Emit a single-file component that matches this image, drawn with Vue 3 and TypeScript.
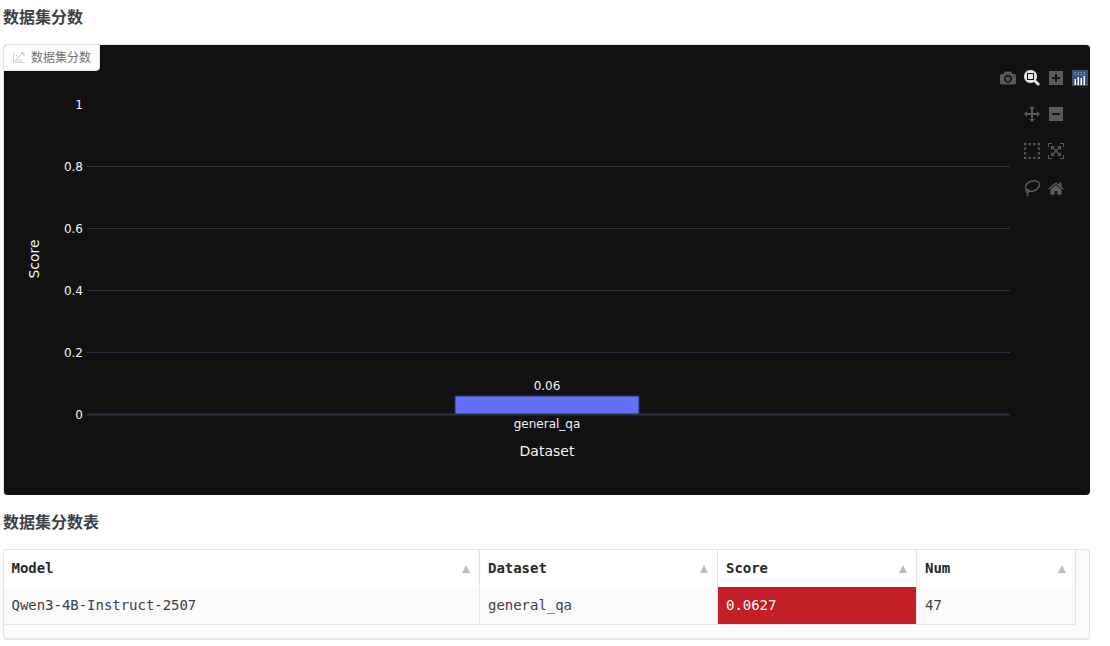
<script setup lang="ts">
const gridYs = [166.5, 228.5, 290.5, 352.5];
const ticks = [
  { label: "1", y: 109 },
  { label: "0.8", y: 171 },
  { label: "0.6", y: 233 },
  { label: "0.4", y: 295 },
  { label: "0.2", y: 357 },
  { label: "0", y: 419 },
];
const icons = [
  { x: 1000, y: 70, sx: 0.016, fill: "#5a5a5a", d: "m500 450c-83 0-150-67-150-150 0-83 67-150 150-150 83 0 150 67 150 150 0 83-67 150-150 150z m400 150h-120c-16 0-34 13-39 29l-31 93c-6 15-23 28-40 28h-340c-16 0-34-13-39-28l-31-93c-6-16-23-29-40-29h-120c-55 0-100-45-100-100v-450c0-55 45-100 100-100h800c55 0 100 45 100 100v450c0 55-45 100-100 100z m-400-550c-138 0-250 112-250 250 0 138 112 250 250 250 138 0 250-112 250-250 0-138-112-250-250-250z m365 380c-19 0-35 16-35 35 0 19 16 35 35 35 19 0 35-16 35-35 0-19-16-35-35-35z" },
  { x: 1024, y: 70, sx: 0.016, fill: "#e4e4e4", d: "m1000-25l-250 251c40 63 63 138 63 218 0 224-182 406-407 406-224 0-406-182-406-406s183-406 407-406c80 0 155 22 218 62l250-250 125 125z m-812 250l0 438 437 0 0-438-437 0z m62 375l313 0 0-312-313 0 0 312z" },
  { x: 1049, y: 70, sx: 0.016, fill: "#5a5a5a", d: "M1 787l0-875 875 0 0 875-875 0z m687-500l-187 0 0-187-125 0 0 187-188 0 0 125 188 0 0 187 125 0 0-187 187 0 0-125z" },
  { x: 1024, y: 106, sx: 0.016, fill: "#5a5a5a", d: "m1000 350l-187 188 0-125-250 0 0 250 125 0-188 187-187-187 125 0 0-250-250 0 0 125-188-188 186-187 0 125 252 0 0-250-125 0 187-188 188 188-125 0 0 250 250 0 0-125 187 187z" },
  { x: 1049, y: 106, sx: 0.016, fill: "#5a5a5a", d: "m0 788l0-876 875 0 0 876-875 0z m688-500l-500 0 0 125 500 0 0-125z" },
  { x: 1024, y: 143, sx: 0.016, fill: "#5a5a5a", d: "m0 850l0-143 143 0 0 143-143 0z m286 0l0-143 143 0 0 143-143 0z m285 0l0-143 143 0 0 143-143 0z m286 0l0-143 143 0 0 143-143 0z m-857-286l0-143 143 0 0 143-143 0z m857 0l0-143 143 0 0 143-143 0z m-857-285l0-143 143 0 0 143-143 0z m857 0l0-143 143 0 0 143-143 0z m-857-286l0-143 143 0 0 143-143 0z m286 0l0-143 143 0 0 143-143 0z m285 0l0-143 143 0 0 143-143 0z m286 0l0-143 143 0 0 143-143 0z" },
  { x: 1048, y: 143, sx: 0.016, fill: "#5a5a5a", d: "m250 850l-187 0-63 0 0-62 0-188 63 0 0 188 187 0 0 62z m688 0l-188 0 0-62 188 0 0-188 62 0 0 188 0 62-62 0z m-875-938l0 188-63 0 0-188 0-62 63 0 187 0 0 62-187 0z m875 188l0-188-188 0 0-62 188 0 62 0 0 62 0 188-62 0z m-125 188l-1 0-93-94-156 156 156 156 92-93 2 0 0 250-250 0 0-2 93-92-156-156-156 156 94 92 0 2-250 0 0-250 0 0 93 93 157-156-157-156-93 94 0 0 0-250 250 0 0 0-94 93 156 157 156-157-93-93 0 0 250 0 0 250z" },
  { x: 1048, y: 180, sx: 0.0172, fill: "#5a5a5a", d: "m786 296v-267q0-15-11-26t-25-10h-214v214h-143v-214h-214q-15 0-25 10t-11 26v267q0 1 0 2t0 2l321 264 321-264q1-1 1-4z m124 39l-34-41q-5-5-12-6h-2q-7 0-12 3l-386 322-386-322q-7-4-13-4-7 2-12 7l-35 41q-4 5-3 13t6 12l401 334q18 15 42 15t43-15l136-114v109q0 8 5 13t13 5h107q8 0 13-5t5-13v-227l122-102q5-5 6-12t-4-13z" },
];
const logoBars = [
  { x: 1074.500, y: 79, h: 6 }, { x: 1077.500, y: 77, h: 8 }, { x: 1080.500, y: 78, h: 7 }, { x: 1083.500, y: 76, h: 9 },
];
const logoDots = [
  { x: 1074.500, y: 72 }, { x: 1077.500, y: 72 }, { x: 1080.500, y: 72 }, { x: 1083.500, y: 72 },
  { x: 1074.500, y: 74 }, { x: 1077.500, y: 74 }, { x: 1080.500, y: 74 }, { x: 1083.500, y: 74 },
];
const columns = ["Model", "Dataset", "Score", "Num"];
const cells = [
  { text: "Qwen3-4B-Instruct-2507", hot: false },
  { text: "general_qa", hot: false },
  { text: "0.0627", hot: true },
  { text: "47", hot: false },
];
</script>

<template>
  <main class="page">
    <h2 class="title">数据集分数</h2>
    <section class="plot">
      <svg class="chart" viewBox="4 45 1086 450" width="1086" height="450">
        <line v-for="y in gridYs" :key="y" x1="87" x2="1010" :y1="y" :y2="y" stroke="#283442" />
        <rect x="455" y="396" width="184" height="18.500" fill="#636efa" stroke="#2b3060" stroke-width="1" />
        <line x1="87" x2="1010" y1="414.5" y2="414.5" stroke="#283442" stroke-width="2" />
        <text v-for="t in ticks" :key="t.label" x="83" :y="t.y" text-anchor="end" class="tick">{{ t.label }}</text>
        <text x="547" y="390" text-anchor="middle" class="tick">0.06</text>
        <text x="547" y="428" text-anchor="middle" class="tick">general_qa</text>
        <text x="547" y="456" text-anchor="middle" class="axis">Dataset</text>
        <text transform="translate(39 259) rotate(-90)" text-anchor="middle" class="axis">Score</text>

        <g v-for="(icon, i) in icons" :key="i" :transform="`translate(${icon.x} ${icon.y}) scale(${icon.sx} ${-icon.sx}) translate(0 -850)`">
          <path :d="icon.d" :fill="icon.fill" />
        </g>
        <g fill="none" stroke="#5a5a5a" stroke-width="1.500">
          <ellipse cx="1032.500" cy="186" rx="7.300" ry="5" transform="rotate(-20 1032.500 186)" />
          <circle cx="1027.500" cy="191" r="1.400" />
          <path d="M1027.500 192.500c.600 1.200.400 2.500-.500 3.500" />
        </g>
        <rect x="1072" y="70" width="16" height="16" fill="#3f4f75" />
        <rect v-for="(d, i) in logoDots" :key="i" :x="d.x" :y="d.y" width="1.500" height="1.200" fill="#6aa3b8" />
        <rect v-for="b in logoBars" :key="b.x" :x="b.x" :y="b.y" width="1.500" :height="b.h" fill="#fff" />
      </svg>
      <div class="tab">
        <svg class="tab-icon" viewBox="0 0 12 12" width="12" height="12">
          <path d="M.5 1v10.500H11.500" fill="none" stroke="#d4d4d4" stroke-width="1" />
          <path d="M2 10 10 2" fill="none" stroke="#a8a8a8" stroke-width="1" stroke-dasharray="1.500 1" />
          <path d="M8 2h3v3M3 4l2 2" fill="none" stroke="#c4c4c4" stroke-width="1" />
          <rect x="2" y="8" width="7" height="2.500" fill="#e4e4e4" />
        </svg>
        <span>数据集分数</span>
      </div>
    </section>

    <h2 class="title second">数据集分数表</h2>
    <section class="table-wrap">
      <div class="grid">
        <div v-for="c in columns" :key="c" class="head">
          <span class="shift">{{ c }}</span>
          <i class="sort"></i>
        </div>
        <div v-for="c in cells" :key="c.text" class="cell" :class="{ hot: c.hot }">
          <span class="shift">{{ c.text }}</span>
        </div>
      </div>
    </section>
  </main>
</template>

<style scoped>
.page {
  width: 1087px;
  margin-left: 3px;
  padding-top: 5px;
  font-family: Inter, "Noto Sans CJK SC", sans-serif;
}
.title {
  margin: 0;
  height: 24px;
  font-size: 16px;
  line-height: 24px;
  font-weight: 600;
  color: #3f3f46;
  font-family: Inter, "Noto Sans CJK SC", sans-serif;
}
.second {
  margin-top: 15px;
}
.plot {
  position: relative;
  margin-top: 15px;
  height: 451px;
  box-sizing: border-box;
  background: #111111;
  border-top: 1px solid #e4e4e7;
  border-left: 1px solid #e4e4e7;
  border-radius: 4px;
  overflow: hidden;
}
.chart {
  display: block;
}
.tab {
  position: absolute;
  left: -1px;
  top: -1px;
  width: 97px;
  height: 27px;
  box-sizing: border-box;
  padding: 0 0 2px 9px;
  display: flex;
  align-items: center;
  gap: 6px;
  background: #fff;
  border: 1px solid #e4e4e7;
  border-radius: 0 0 4px 0;
  font-size: 12px;
  color: #71717a;
}
.tab-icon {
  flex: none;
}
.tick {
  font: 12px "DejaVu Sans", sans-serif;
  fill: #f2f5fa;
}
.axis {
  font: 14px "DejaVu Sans", sans-serif;
  fill: #f2f5fa;
}
.table-wrap {
  margin-top: 15px;
  height: 91px;
  box-sizing: border-box;
  background: #fafafa;
  border: 1px solid #e4e4e7;
  border-bottom-width: 2px;
  border-radius: 4px;
  overflow: hidden;
}
.grid {
  width: 1071px;
  display: grid;
  grid-template-columns: 476px 238px 199px 158px;
  grid-template-rows: 37px 37px;
  border-bottom: 1px solid #e4e4e7;
  border-right: 1px solid #e4e4e7;
  font-family: "DejaVu Sans Mono", monospace;
  font-size: 14px;
  letter-spacing: -0.03px;
  color: #3f3f46;
}
.head {
  background: #fff;
  border-right: 1px solid #e4e4e7;
  padding: 0 9px 0 8px;
  display: flex;
  align-items: center;
  justify-content: space-between;
  font-weight: 700;
  color: #27272a;
}
.shift {
  margin-top: -2px;
}
.head:first-child .shift,
.cell:nth-child(5) .shift {
  margin-left: -0.5px;
}
.head:nth-child(4),
.cell:nth-child(8) {
  border-right: 0;
}
.sort {
  width: 0;
  height: 0;
  border-left: 4.500px solid transparent;
  border-right: 4.500px solid transparent;
  border-bottom: 8px solid #bdbdc4;
}
.cell {
  background: #fafafa;
  border-right: 1px solid #e4e4e7;
  padding: 0 8px;
  display: flex;
  align-items: center;
}
.hot {
  background: #c41e26;
  color: #fff;
}
</style>
